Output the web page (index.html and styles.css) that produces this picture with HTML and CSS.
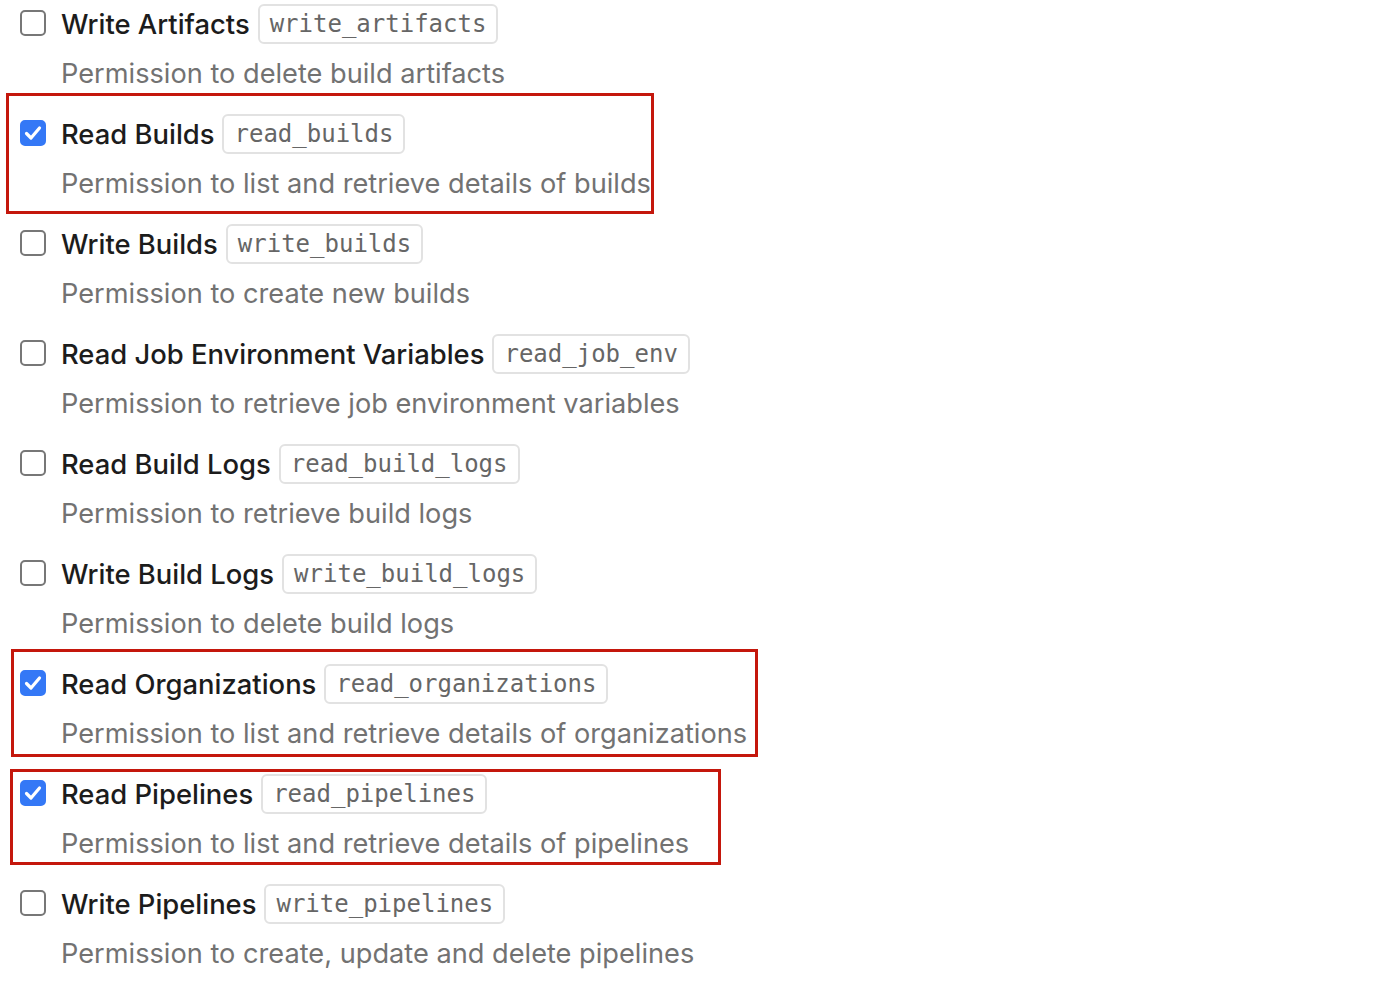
FILE: index.html
```html
<!DOCTYPE html>
<html>
<head>
<meta charset="utf-8">
<link rel="stylesheet" href="styles.css">
</head>
<body>
<div class="list">
  <div class="perm">
    <div class="head"><span class="box"></span><span class="name">Write Artifacts</span><code class="scope">write_artifacts</code></div>
    <div class="desc">Permission to delete build artifacts</div>
  </div>
  <div class="perm">
    <div class="head"><span class="box checked"><svg viewBox="0 0 22 22"><path d="M4.5 11.5 L9 16 L17.5 6" /></svg></span><span class="name">Read Builds</span><code class="scope">read_builds</code></div>
    <div class="desc">Permission to list and retrieve details of builds</div>
    <div class="mark m1"></div>
  </div>
  <div class="perm">
    <div class="head"><span class="box"></span><span class="name">Write Builds</span><code class="scope">write_builds</code></div>
    <div class="desc">Permission to create new builds</div>
  </div>
  <div class="perm">
    <div class="head"><span class="box"></span><span class="name">Read Job Environment Variables</span><code class="scope">read_job_env</code></div>
    <div class="desc">Permission to retrieve job environment variables</div>
  </div>
  <div class="perm">
    <div class="head"><span class="box"></span><span class="name">Read Build Logs</span><code class="scope">read_build_logs</code></div>
    <div class="desc">Permission to retrieve build logs</div>
  </div>
  <div class="perm">
    <div class="head"><span class="box"></span><span class="name">Write Build Logs</span><code class="scope">write_build_logs</code></div>
    <div class="desc">Permission to delete build logs</div>
  </div>
  <div class="perm">
    <div class="head"><span class="box checked"><svg viewBox="0 0 22 22"><path d="M4.5 11.5 L9 16 L17.5 6" /></svg></span><span class="name">Read Organizations</span><code class="scope">read_organizations</code></div>
    <div class="desc">Permission to list and retrieve details of organizations</div>
    <div class="mark m2"></div>
  </div>
  <div class="perm">
    <div class="head"><span class="box checked"><svg viewBox="0 0 22 22"><path d="M4.5 11.5 L9 16 L17.5 6" /></svg></span><span class="name">Read Pipelines</span><code class="scope">read_pipelines</code></div>
    <div class="desc">Permission to list and retrieve details of pipelines</div>
    <div class="mark m3"></div>
  </div>
  <div class="perm">
    <div class="head"><span class="box"></span><span class="name">Write Pipelines</span><code class="scope">write_pipelines</code></div>
    <div class="desc">Permission to create, update and delete pipelines</div>
  </div>
</div>
</body>
</html>
```
FILE: styles.css
```css
html, body {
  margin: 0;
  padding: 0;
  background: #ffffff;
}
body {
  font-family: Inter, "Liberation Sans", Arial, sans-serif;
  color: #222222;
}
.list {
  display: flex;
  flex-direction: column;
  padding-left: 20px;
}
.perm {
  position: relative;
  height: 110px;
  display: flex;
  flex-direction: column;
}
.head {
  height: 48px;
  display: flex;
  align-items: center;
}
.box {
  width: 22px;
  height: 22px;
  border: 2px solid #777777;
  border-radius: 5px;
  box-sizing: content-box;
  flex: none;
  margin-right: 15px;
  margin-top: -2px;
  display: flex;
  align-items: center;
  justify-content: center;
}
.box.checked {
  background: #3478f6;
  border-color: #3478f6;
}
.box svg {
  width: 22px;
  height: 22px;
  flex: none;
}
.box svg path {
  fill: none;
  stroke: #ffffff;
  stroke-width: 3.2;
  stroke-linecap: round;
  stroke-linejoin: round;
}
.name {
  font-size: 27.4px;
  font-weight: 500;
  color: #1c1c1c;
  line-height: 30px;
}
.scope {
  margin-left: 8px;
  font-family: "DejaVu Sans Mono", "Liberation Mono", monospace;
  font-size: 24px;
  color: #666666;
  border: 2px solid #e2e2e2;
  border-radius: 6px;
  height: 40px;
  box-sizing: border-box;
  display: flex;
  align-items: center;
  padding: 0 10px;
}
.desc {
  margin-left: 41px;
  padding-top: 1px;
  font-size: 27.2px;
  line-height: 50px;
  color: #727272;
}
.mark {
  position: absolute;
  border: 3px solid #c4170c;
  box-sizing: border-box;
  pointer-events: none;
}
.m1 {
  left: -14px;
  top: -17px;
  width: 648px;
  height: 121px;
}
.m2 {
  left: -9px;
  top: -11px;
  width: 747px;
  height: 108px;
}
.m3 {
  left: -10px;
  top: -1px;
  width: 711px;
  height: 96px;
}
```
